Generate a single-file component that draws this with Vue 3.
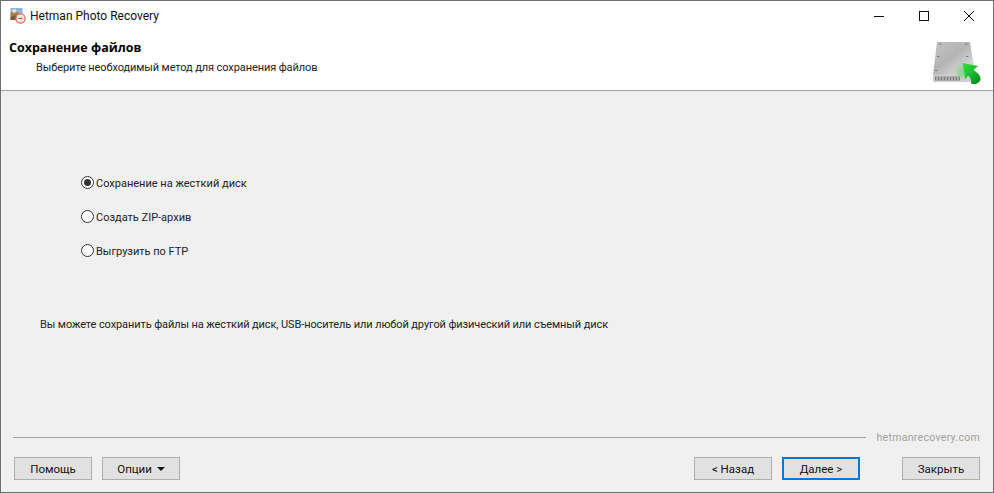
<script setup>
const options = [
  { label: 'Сохранение на жесткий диск', checked: true },
  { label: 'Создать ZIP-архив', checked: false },
  { label: 'Выгрузить по FTP', checked: false },
]
</script>

<template>
  <div class="window">
    <div class="titlebar">
      <svg class="app-icon" width="16" height="16" viewBox="0 0 16 16">
        <rect x="0.5" y="0" width="12" height="10" fill="#8fb6d6" />
        <path d="M0.5 5 L3 3 L6 3.5 L12.5 7 V12 H0.5 Z" fill="#a9804f" />
        <path d="M2 2 L5.5 1 L6.5 4 L3 5 Z" fill="#efe3cf" />
        <path d="M0.5 9 L6 7 V12 H0.5 Z" fill="#7d5a36" />
        <circle cx="10.5" cy="10.5" r="4.6" fill="#f6e6df" stroke="#d0766e" stroke-width="1.3" />
        <path d="M8.5 10.5 H12.5" stroke="#c8574f" stroke-width="1.2" />
      </svg>
      <span class="app-name">Hetman Photo Recovery</span>
      <div class="win-controls">
        <svg width="12" height="12" viewBox="0 0 12 12"><path d="M1 6.5 H11" stroke="#111" /></svg>
        <svg width="12" height="12" viewBox="0 0 12 12"><rect x="1.5" y="1.5" width="9" height="9" fill="none" stroke="#111" /></svg>
        <svg width="12" height="12" viewBox="0 0 12 12"><path d="M1 1 L11 11 M11 1 L1 11" stroke="#111" /></svg>
      </div>
    </div>
    <header class="header">
      <div class="header-text">
        <h1>Сохранение файлов</h1>
        <p>Выберите необходимый метод для сохранения файлов</p>
      </div>
      <svg class="disk" width="50" height="46" viewBox="0 0 50 46">
        <defs>
          <linearGradient id="dg" x1="0" y1="0" x2="1" y2="1">
            <stop offset="0" stop-color="#c4c4c4" />
            <stop offset="0.45" stop-color="#b4b4b4" />
            <stop offset="0.75" stop-color="#d2d2d2" />
            <stop offset="1" stop-color="#bcbcbc" />
          </linearGradient>
          <linearGradient id="ag" x1="0" y1="0" x2="1" y2="1">
            <stop offset="0" stop-color="#3fe03f" />
            <stop offset="0.6" stop-color="#12b52a" />
            <stop offset="1" stop-color="#0a7a1e" />
          </linearGradient>
          <filter id="glow" x="-50%" y="-50%" width="200%" height="200%">
            <feGaussianBlur stdDeviation="2" />
          </filter>
        </defs>
        <path d="M6 2 H39 L44 35 H2 Z" fill="url(#dg)" />
        <rect x="2" y="35" width="42" height="7" fill="#d0d0d0" />
        <rect x="4" y="36.5" width="25" height="4" fill="#777" />
        <path d="M6 36.5 V40.5 M9 36.5 V40.5 M12 36.5 V40.5 M15 36.5 V40.5 M18 36.5 V40.5 M21 36.5 V40.5 M24 36.5 V40.5 M27 36.5 V40.5" stroke="#e2e2e2" />
        <g fill="#7c7c7c">
          <rect x="8" y="3.5" width="2.5" height="1" />
          <rect x="34" y="3.5" width="2.5" height="1" />
          <rect x="6" y="16" width="2.5" height="1" />
          <rect x="35" y="16" width="2.5" height="1" />
          <rect x="4" y="30" width="2.5" height="1" />
        </g>
        <ellipse cx="31" cy="32" rx="5" ry="6" fill="#55d868" opacity="0.6" filter="url(#glow)" />
        <path d="M31.5 23 L47 26 L42.5 30 C47 33 50 36 49.5 39.5 C49 43 44 45 40 43.5 C41 39 38 36.5 37 35.5 L34.5 39.5 Z" fill="url(#ag)" />
      </svg>
    </header>
    <main class="body">
      <div class="options">
        <label v-for="o in options" :key="o.label" class="radio">
          <span class="dot" :class="{ checked: o.checked }"></span>
          <span class="label">{{ o.label }}</span>
        </label>
      </div>
      <p class="hint">Вы можете сохранить файлы на жесткий диск, USB-носитель или любой другой физический или съемный диск</p>
    </main>
    <div class="rule">
      <span class="line"></span>
      <span class="brand">hetmanrecovery.com</span>
    </div>
    <footer class="footer">
      <div class="group">
        <button>Помощь</button>
        <button>Опции <span class="caret"></span></button>
      </div>
      <div class="group right">
        <button>&lt; Назад</button>
        <button class="default">Далее &gt;</button>
        <button class="close">Закрыть</button>
      </div>
    </footer>
  </div>
</template>

<style scoped>
.window {
  box-sizing: border-box;
  width: 994px;
  height: 493px;
  border: 1px solid #707070;
  background: #f0f0f0;
  display: flex;
  flex-direction: column;
  font-family: Roboto, "Noto Sans", sans-serif;
  font-size: 11px;
  color: #000;
  overflow: hidden;
}
.titlebar {
  height: 30px;
  background: #fff;
  display: flex;
  align-items: center;
  padding-left: 9px;
  flex: none;
}
.app-icon { flex: none; }
.app-name {
  margin-left: 4px;
  font-size: 12px;
  color: #111;
}
.win-controls {
  margin-left: auto;
  display: flex;
  gap: 33px;
  padding-right: 18px;
}
.header {
  height: 60px;
  flex: none;
  box-sizing: border-box;
  background: #fff;
  border-bottom: 1px solid #a0a0a0;
  display: flex;
  justify-content: space-between;
  padding: 0 12px 0 8px;
}
h1 {
  margin: 9px 0 0;
  font-family: "Open Sans", sans-serif;
  font-size: 12.5px;
  font-weight: 700;
  line-height: 16px;
}
.header-text p {
  margin: 4px 0 0 27px;
  line-height: 16px;
  letter-spacing: -0.1px;
  color: #222;
}
.disk { margin-top: 9px; }
.body {
  flex: 1;
  display: flex;
  flex-direction: column;
  padding-left: 39px;
}
.options {
  display: flex;
  flex-direction: column;
  gap: 17px;
  margin: 83px 0 0 41px;
}
.radio {
  display: flex;
  align-items: center;
  gap: 2px;
  height: 17px;
  color: #222;
}
.label { padding-top: 2px; }
.dot {
  box-sizing: border-box;
  width: 13px;
  height: 13px;
  border: 1px solid #333;
  border-radius: 50%;
  background: #fff;
  position: relative;
  flex: none;
}
.dot.checked::after {
  content: "";
  position: absolute;
  left: 2px;
  top: 2px;
  width: 7px;
  height: 7px;
  border-radius: 50%;
  background: #333;
}
.hint {
  margin: 58px 0 0;
  line-height: 16px;
  letter-spacing: -0.1px;
  color: #222;
}
.rule {
  display: flex;
  align-items: center;
  padding: 0 13px 0 12px;
  height: 16px;
  flex: none;
  margin-top: -1px;
}
.line {
  flex: 1;
  height: 1px;
  background: #a0a0a0;
}
.brand {
  margin-left: 11px;
  color: #a0a0a0;
  font-size: 10.5px;
  letter-spacing: 0.3px;
}
.footer {
  height: 47px;
  flex: none;
  display: flex;
  justify-content: space-between;
  padding: 12px 13px 0;
  box-sizing: border-box;
}
.group { display: flex; gap: 10px; align-items: flex-start; }
button {
  box-sizing: border-box;
  width: 78px;
  height: 23px;
  background: #e1e1e1;
  border: 1px solid #adadad;
  font: inherit;
  font-size: 11.5px;
  color: #111;
  padding: 0;
}
button.default { border: 2px solid #0078d7; }
button.close { margin-left: 32px; }
.caret {
  display: inline-block;
  width: 0;
  height: 0;
  border-left: 4px solid transparent;
  border-right: 4px solid transparent;
  border-top: 4px solid #111;
  vertical-align: 2px;
  margin-left: 2px;
}
</style>
